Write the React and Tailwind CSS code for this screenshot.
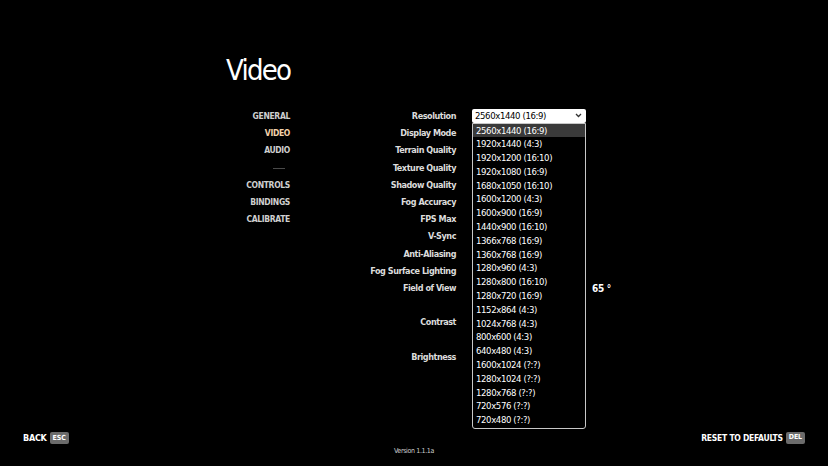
import React from "react";

const font = { fontFamily: "'Liberation Sans Narrow', 'DejaVu Sans Condensed', 'Roboto', sans-serif" };

const navItems = [
  { label: "GENERAL" },
  { label: "VIDEO", active: true },
  { label: "AUDIO" },
  { divider: true },
  { label: "CONTROLS" },
  { label: "BINDINGS" },
  { label: "CALIBRATE" },
];

const settings = [
  { label: "Resolution" },
  { label: "Display Mode" },
  { label: "Terrain Quality" },
  { label: "Texture Quality" },
  { label: "Shadow Quality" },
  { label: "Fog Accuracy" },
  { label: "FPS Max" },
  { label: "V-Sync" },
  { label: "Anti-Aliasing" },
  { label: "Fog Surface Lighting" },
  { label: "Field of View", tall: true, value: "65 °" },
  { label: "Contrast", tall: true },
  { label: "Brightness", tall: true },
];

const resolutions = [
  "2560x1440 (16:9)",
  "1920x1440 (4:3)",
  "1920x1200 (16:10)",
  "1920x1080 (16:9)",
  "1680x1050 (16:10)",
  "1600x1200 (4:3)",
  "1600x900 (16:9)",
  "1440x900 (16:10)",
  "1366x768 (16:9)",
  "1360x768 (16:9)",
  "1280x960 (4:3)",
  "1280x800 (16:10)",
  "1280x720 (16:9)",
  "1152x864 (4:3)",
  "1024x768 (4:3)",
  "800x600 (4:3)",
  "640x480 (4:3)",
  "1600x1024 (?:?)",
  "1280x1024 (?:?)",
  "1280x768 (?:?)",
  "720x576 (?:?)",
  "720x480 (?:?)",
];

function KeyBadge({ children }) {
  return (
    <span className="ml-[3px] inline-flex h-[12px] items-center rounded-[2px] bg-[#6b6b6b] px-[3px] text-[7px] font-bold leading-none tracking-[-0.02em] text-white">
      {children}
    </span>
  );
}

export default function App() {
  const selected = resolutions[0];

  return (
    <div className="flex h-[466px] w-full flex-col overflow-hidden bg-black text-[#d6d6d6]" style={font}>
      {/* title */}
      <h1 className="pl-[226px] pt-[52px] text-[29px] font-normal leading-[36px] tracking-[-0.06em] text-white">
        Video
      </h1>

      <div className="mt-[19px] flex">
        {/* left nav */}
        <nav className="w-[290px] pt-[1px] text-right">
          {navItems.map((item, i) =>
            item.divider ? (
              <div key={i} className="flex h-[17.2px] items-center justify-end pr-[5px]">
                <div className="h-px w-[12px] bg-[#4a4a4a]" />
              </div>
            ) : (
              <div
                key={i}
                className={`h-[17.2px] text-[8.5px] font-bold leading-[17.2px] tracking-[-0.04em] ${
                  item.active ? "text-[#f4d2ab]" : "text-[#cfcfcf]"
                }`}
              >
                {item.label}
              </div>
            )
          )}
        </nav>

        {/* settings rows */}
        <div className="flex flex-col pt-[1px]">
          {settings.map((s, i) => (
            <div key={i} className={`flex ${s.tall ? "h-[34.4px]" : "h-[17.2px]"}`}>
              <div className="w-[166px] text-right text-[9px] font-bold leading-[17.2px] tracking-[-0.05em] text-[#dcdcdc]">
                {s.label}
              </div>
              <div className="relative ml-[16px] w-[114px]">
                {i === 0 && (
                  <>
                    <div className="mt-[0.5px] flex h-[14px] items-center justify-between rounded-[2px] bg-white pl-[3px] pr-[4px] text-[9.5px] leading-none tracking-[-0.04em] text-black">
                      <span>{selected}</span>
                      <svg width="7" height="5" viewBox="0 0 7 5" className="text-[#333]">
                        <path d="M1 1l2.5 2.5L6 1" fill="none" stroke="currentColor" strokeWidth="1.3" />
                      </svg>
                    </div>
                    {/* open dropdown list */}
                    <ul className="absolute left-0 top-[14.5px] z-10 w-[114px] rounded-b-[3px] border border-[#c8c8c8] bg-black pb-[1px]">
                      {resolutions.map((r) => (
                        <li
                          key={r}
                          className={`h-[13.8px] pl-[3px] text-[9.5px] leading-[13.8px] tracking-[-0.04em] text-white ${
                            r === selected ? "bg-[#3a3a3a]" : ""
                          }`}
                        >
                          {r}
                        </li>
                      ))}
                    </ul>
                  </>
                )}
              </div>
              {s.value && (
                <div className="ml-[6px] text-[10px] font-bold leading-[17.2px] tracking-[-0.03em] text-white">
                  {s.value}
                </div>
              )}
            </div>
          ))}
        </div>
      </div>

      {/* footer */}
      <div className="mt-auto grid grid-cols-3 items-start px-[23px] pb-[10px]">
        <div className="flex items-center text-[9px] font-bold tracking-[-0.03em] text-white">
          BACK
          <KeyBadge>ESC</KeyBadge>
        </div>
        <div className="pt-[14px] text-center text-[7px] tracking-[-0.05em] text-[#cfcfcf]">Version 1.1.1a</div>
        <div className="flex items-center justify-end text-[8.5px] font-bold tracking-[-0.03em] text-white">
          RESET TO DEFAULTS
          <KeyBadge>DEL</KeyBadge>
        </div>
      </div>
    </div>
  );
}
